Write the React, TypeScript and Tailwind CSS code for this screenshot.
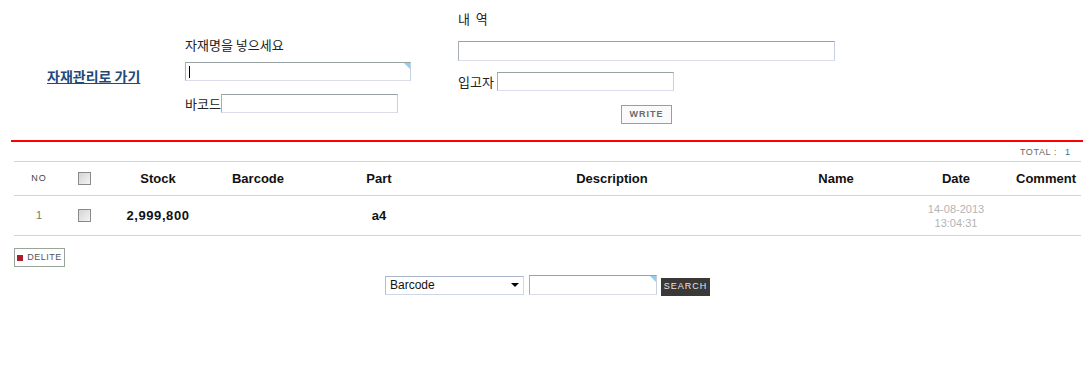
import React from "react"

const kr = "font-['Noto_Sans_CJK_KR','Liberation_Sans',sans-serif]"
const sans = "font-['Liberation_Sans',Arial,sans-serif]"

const cols = "grid grid-cols-[50px_41px_106px_94px_148px_318px_130px_110px_70px] items-center"

const headers = ["Stock", "Barcode", "Part", "Description", "Name", "Date", "Comment"]

function Field({ className = "", corner = false, cursor = false }: { className?: string; corner?: boolean; cursor?: boolean }) {
  return (
    <div
      className={`relative border border-t-[#9aa3a3] border-l-[#a7afaf] border-r-[#c8cfe0] border-b-[#dcdcec] border-b-dotted bg-white ${className}`}
    >
      {cursor && <span className="absolute left-[3px] top-[3px] h-[12px] w-px bg-black" />}
      {corner && (
        <span className="absolute right-0 top-0 h-0 w-0 border-l-[6px] border-t-[6px] border-l-transparent border-t-[#8fd0ea]" />
      )}
    </div>
  )
}

function Check() {
  return <span className="block h-[13px] w-[13px] border border-[#8a8a8a] bg-gradient-to-br from-[#d4d4d8] to-[#f4f4f4]" />
}

export default function App() {
  const rows = [{ no: 1, stock: "2,999,800", barcode: "", part: "a4", desc: "", name: "", date: "14-08-2013", time: "13:04:31", comment: "" }]

  return (
    <div className={`h-[369px] w-[1090px] bg-white text-[#222] ${sans}`}>
      {/* 입력 영역 */}
      <div className="flex h-[140px]">
        <div className="w-[185px] pl-[47px] pt-[65px]">
          <a className={`text-[14px] leading-[16px] text-[#1f4a7a] underline ${kr} font-semibold`}>자재관리로 가기</a>
        </div>

        <div className="w-[273px] pt-[37px]">
          <p className={`text-[13px] leading-[16px] ${kr}`}>자재명을 넣으세요</p>
          <Field className="mt-[9px] h-[19px] w-[226px]" corner cursor />
          <div className="mt-[13px] flex items-center">
            <span className={`text-[13px] leading-[16px] ${kr}`}>바코드</span>
            <Field className="h-[19px] w-[177px]" />
          </div>
        </div>

        <div className="w-[377px] pt-[11px]">
          <p className={`text-[13px] leading-[16px] ${kr}`}>내&nbsp; 역</p>
          <Field className="mt-[14px] h-[20px] w-[377px]" />
          <div className="mt-[11px] flex items-center">
            <span className={`text-[13px] leading-[16px] ${kr}`}>입고자</span>
            <Field className="ml-[3px] h-[19px] w-[177px]" />
          </div>
          <div className="mt-[14px] flex justify-center">
            <button className="flex h-[19px] w-[51px] items-center justify-center border border-[#9a9f9a] bg-[#fbfafb] text-[9px] font-bold tracking-[1px] text-[#6a6a6a]">
              WRITE
            </button>
          </div>
        </div>
      </div>

      <div className="ml-[11px] h-[2px] w-[1072px] bg-[#ff0000]" />

      {/* 목록 */}
      <div className="ml-[14px] w-[1067px]">
        <div className="flex h-[19px] items-center justify-end pr-[11px] pt-[2px] text-[9px]">
          <span className="tracking-[0.6px] text-[#666]">TOTAL :</span>
          <span className="ml-[8px] text-[#3c6e8f]">1</span>
        </div>

        <div className={`${cols} h-[35px] border-y border-[#d4d4d4] text-center`}>
          <span className="text-[9px] tracking-[1px] text-[#444]">NO</span>
          <span className="flex justify-center"><Check /></span>
          {headers.map((h) => (
            <span key={h} className="text-[13px] font-bold text-[#111]">{h}</span>
          ))}
        </div>

        {rows.map((r) => (
          <div key={r.no} className={`${cols} h-[40px] border-b border-[#d4d4d4] text-center`}>
            <span className="text-[11px] text-[#7a7a6a]">{r.no}</span>
            <span className="flex justify-center"><Check /></span>
            <span className="text-[13px] font-bold tracking-[0.6px] text-[#111]">{r.stock}</span>
            <span>{r.barcode}</span>
            <span className="text-[13px] font-bold text-[#111]">{r.part}</span>
            <span>{r.desc}</span>
            <span>{r.name}</span>
            <span className="text-[11px] leading-[14px] text-[#b4b4b4]">
              {r.date}
              <br />
              {r.time}
            </span>
            <span>{r.comment}</span>
          </div>
        ))}

        <button className="mt-[12px] flex h-[19px] w-[51px] items-center justify-center gap-[4px] border border-[#9aa59a] bg-white text-[9px] tracking-[0.5px] text-[#555]">
          <span className="h-[6px] w-[6px] bg-[#a8202a]" />
          DELITE
        </button>
      </div>

      {/* 검색 */}
      <div className="mt-[7px] flex items-center justify-center pl-[5px]">
        <div className="flex h-[19px] w-[139px] items-center justify-between border border-t-[#a9b4cf] border-l-[#b7bfd6] border-r-[#d0d6ea] border-b-[#d0d6ea] border-b-dotted px-[4px] text-[12px] text-[#111]">
          <span>Barcode</span>
          <span className="h-0 w-0 border-x-[4px] border-t-[4px] border-x-transparent border-t-black" />
        </div>
        <Field className="ml-[5px] h-[20px] w-[128px]" corner />
        <button className="ml-[4px] mt-[4px] flex h-[18px] w-[49px] items-center justify-center bg-[#3b3838] text-[9px] tracking-[1px] text-[#e6e6e6]">
          SEARCH
        </button>
      </div>
    </div>
  )
}
